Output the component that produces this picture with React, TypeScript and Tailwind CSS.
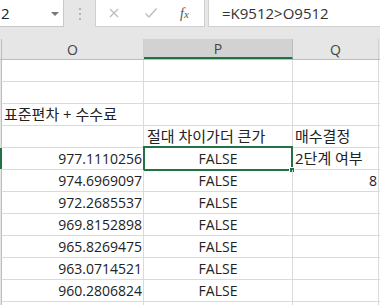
const rows: { o?: string; oKo?: boolean; p?: string; pKo?: boolean; q?: string; qKo?: boolean; qRight?: boolean; sel?: boolean }[] = [
  {},
  {},
  { o: '표준편차 + 수수료', oKo: true },
  { p: '절대 차이가더 큰가', pKo: true, q: '매수결정', qKo: true },
  { o: '977.1110256', p: 'FALSE', q: '2단계 여부', qKo: true, sel: true },
  { o: '974.6969097', p: 'FALSE', q: '8', qRight: true },
  { o: '972.2685537', p: 'FALSE' },
  { o: '969.8152898', p: 'FALSE' },
  { o: '965.8269475', p: 'FALSE' },
  { o: '963.0714521', p: 'FALSE' },
  { o: '960.2806824', p: 'FALSE' },
  {},
];

export default function App() {
  return (
    <div className="w-[380px] h-[305px] overflow-hidden bg-white text-[#222] font-['Open_Sans','Noto_Sans_CJK_KR',sans-serif] text-[14px]">
      {/* formula bar */}
      <div className="flex items-start h-[39px] bg-[#e6e6e6]">
        <div className="relative w-[64px] h-[27px] bg-white border-r border-b border-[#c8c8c8] flex items-center pl-[1px] text-[15px]">
          2
          <div className="absolute left-[51px] top-[12px] w-0 h-0 border-l-[4px] border-r-[4px] border-t-[4px] border-l-transparent border-r-transparent border-t-[#777]" />
        </div>
        <div className="w-[31px] h-[27px] flex flex-col items-center justify-center gap-[3px]">
          <div className="w-[2px] h-[2px] bg-[#b5b5b5]" />
          <div className="w-[2px] h-[2px] bg-[#b5b5b5]" />
          <div className="w-[2px] h-[2px] bg-[#b5b5b5]" />
        </div>
        <div className="w-[110px] h-[27px] bg-white border border-t-0 border-[#d0d0d0] flex items-center">
          <svg width="12" height="12" viewBox="0 0 12 12" className="ml-[12px]">
            <path d="M2 2 L10 10 M10 2 L2 10" stroke="#bdbdbd" strokeWidth="1.3" fill="none" />
          </svg>
          <svg width="14" height="12" viewBox="0 0 14 12" className="ml-[24px]">
            <path d="M1.5 6.5 L5 10 L12.5 1.5" stroke="#bdbdbd" strokeWidth="1.4" fill="none" />
          </svg>
          <span className="ml-[22px] text-[14px] italic text-[#555] font-['Liberation_Serif',serif]">
            f<span className="text-[11px]">x</span>
          </span>
        </div>
        <div className="ml-[3px] flex-1 h-[27px] bg-white border border-t-0 border-r-0 border-[#d0d0d0] flex items-center pl-[13px] text-[15px] text-[#333]">
          =K9512&gt;O9512
        </div>
      </div>

      {/* column headers */}
      <div className="flex h-[21px] bg-[#e6e6e6] border-b border-[#bdbdbd] text-[#444] text-[14px]">
        <div className="w-[2px] border-r border-[#bdbdbd]" />
        <div className="w-[142px] border-r border-[#d0d0d0] flex items-center justify-center">O</div>
        <div className="w-[149px] border-r border-[#bdbdbd] bg-[#d2d2d2] border-b-2 border-b-[#217346] flex items-center justify-center">P</div>
        <div className="w-[86px] border-r border-[#d0d0d0] flex items-center justify-center">Q</div>
      </div>

      {/* grid */}
      {rows.map((r, i) => (
        <div key={i} className="flex h-[22px] border-b border-[#dadada]">
          <div className={`w-[2px] ${r.sel ? 'bg-[#217346]' : 'bg-[#e6e6e6] border-r border-[#bdbdbd]'}`} />
          <div className="relative w-[142px] border-r border-[#dadada] flex items-center">
            {r.o && (
              r.oKo ? (
                <span className="absolute left-[2px] whitespace-nowrap text-[15px]">{r.o}</span>
              ) : (
                <span className="ml-auto pr-[1px]">{r.o}</span>
              )
            )}
          </div>
          <div className="relative w-[149px] border-r border-[#dadada] flex items-center">
            {r.p && (
              r.pKo ? (
                <span className="pl-[3px] whitespace-nowrap text-[15px]">{r.p}</span>
              ) : (
                <span className="mx-auto">{r.p}</span>
              )
            )}
            {r.sel && (
              <div className="absolute -left-[1px] -top-[2px] w-[150px] h-[25px] border-2 border-[#217346]">
                <div className="absolute -right-[4px] -bottom-[4px] w-[6px] h-[6px] bg-[#217346] border border-white" />
              </div>
            )}
          </div>
          <div className="w-[86px] border-r border-[#dadada] flex items-center">
            {r.q && (
              r.qRight ? (
                <span className="ml-auto pr-[1px]">{r.q}</span>
              ) : (
                <span className={`pl-[2px] whitespace-nowrap ${r.qKo ? 'text-[15px]' : ''}`}>{r.q}</span>
              )
            )}
          </div>
        </div>
      ))}
    </div>
  );
}
